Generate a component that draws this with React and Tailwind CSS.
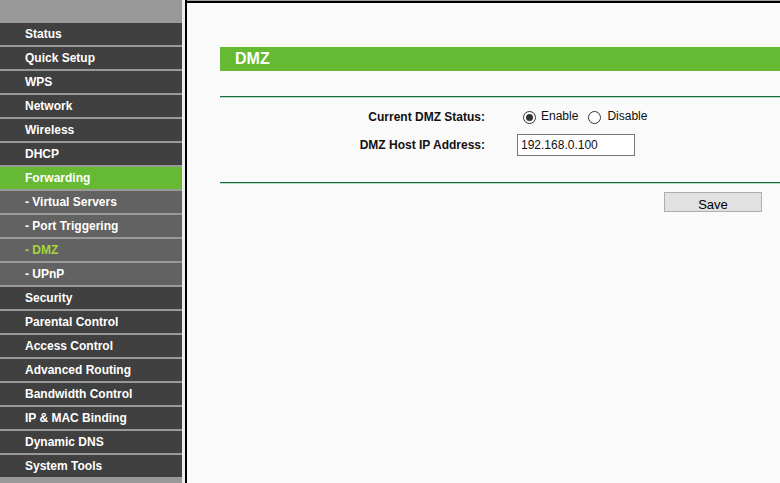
// App.jsx
// Router admin page: left nav menu + DMZ settings panel.

import { useState } from "react";

const MENU = [
  { label: "Status" },
  { label: "Quick Setup" },
  { label: "WPS" },
  { label: "Network" },
  { label: "Wireless" },
  { label: "DHCP" },
  { label: "Forwarding", active: true },
  { label: "- Virtual Servers", sub: true },
  { label: "- Port Triggering", sub: true },
  { label: "- DMZ", sub: true, current: true },
  { label: "- UPnP", sub: true },
  { label: "Security" },
  { label: "Parental Control" },
  { label: "Access Control" },
  { label: "Advanced Routing" },
  { label: "Bandwidth Control" },
  { label: "IP & MAC Binding" },
  { label: "Dynamic DNS" },
  { label: "System Tools" },
];

function Radio({ checked, onClick }) {
  return (
    <span
      onClick={onClick}
      className="w-[13px] h-[13px] rounded-full border border-[#333] bg-white flex items-center justify-center cursor-pointer"
    >
      {checked && <span className="w-[7px] h-[7px] rounded-full bg-[#333]" />}
    </span>
  );
}

export default function App() {
  const [enabled, setEnabled] = useState(true);
  const [ip, setIp] = useState("192.168.0.100");

  return (
    <div
      className="flex h-[483px] w-[780px] overflow-hidden"
      style={{ fontFamily: '"Liberation Sans", Arial, sans-serif' }}
    >
      {/* Left menu */}
      <div className="w-[182px] shrink-0 bg-[#999] pt-[23px] flex flex-col">
        {MENU.map((m) => (
          <div
            key={m.label}
            className={
              "h-[22px] mb-[2px] shrink-0 flex items-center pl-[25px] text-[12px] font-bold " +
              (m.active
                ? "bg-[#66b933] text-white"
                : m.sub
                ? "bg-[#626262] " + (m.current ? "text-[#a8d53a]" : "text-white")
                : "bg-[#404040] text-white")
            }
          >
            {m.label}
          </div>
        ))}
      </div>
      <div className="w-[3px] shrink-0 bg-[#ececec]" />
      <div className="w-[2px] shrink-0 bg-black" />

      {/* Main panel */}
      <div className="flex-1 bg-[#fafafa] flex flex-col">
        <div className="h-px bg-[#a0a0a0]" />
        <div className="h-[2px] bg-black" />
        <div className="pl-[33px] pt-[44px]">
          <div className="h-[24px] bg-[#66b933] flex items-center pl-[15px] text-white text-[16px] font-bold">
            DMZ
          </div>

          <div className="mt-[25px] h-px bg-[#1d6b41]" />
          <div className="h-px bg-[#b5dcbf]" />

          <div className="pt-[10px] pb-[26px] text-[12px] text-[#111]">
            <div className="flex items-center h-[18px]">
              <div className="w-[265px] text-right font-bold">Current DMZ Status:</div>
              <div className="ml-[38px] flex items-center">
                <Radio checked={enabled} onClick={() => setEnabled(true)} />
                <span className="ml-[5px] -mt-[2px]">Enable</span>
                <span className="ml-[10px]">
                  <Radio checked={!enabled} onClick={() => setEnabled(false)} />
                </span>
                <span className="ml-[6px] -mt-[2px]">Disable</span>
              </div>
            </div>
            <div className="flex items-center mt-[8px]">
              <div className="w-[265px] text-right font-bold">DMZ Host IP Address:</div>
              <input
                value={ip}
                onChange={(e) => setIp(e.target.value)}
                className="ml-[32px] w-[118px] h-[22px] border border-[#777] bg-white px-[3px] text-[12px] outline-none"
              />
            </div>
          </div>

          <div className="h-px bg-[#1d6b41]" />
          <div className="h-px bg-[#b5dcbf]" />

          <div className="pt-[8px] pl-[444px]">
            <button className="w-[98px] h-[20px] bg-[#e1e1e1] border border-[#adadad] text-[13px] text-black flex items-center justify-center pt-[5px]">
              Save
            </button>
          </div>
        </div>
      </div>
    </div>
  );
}
